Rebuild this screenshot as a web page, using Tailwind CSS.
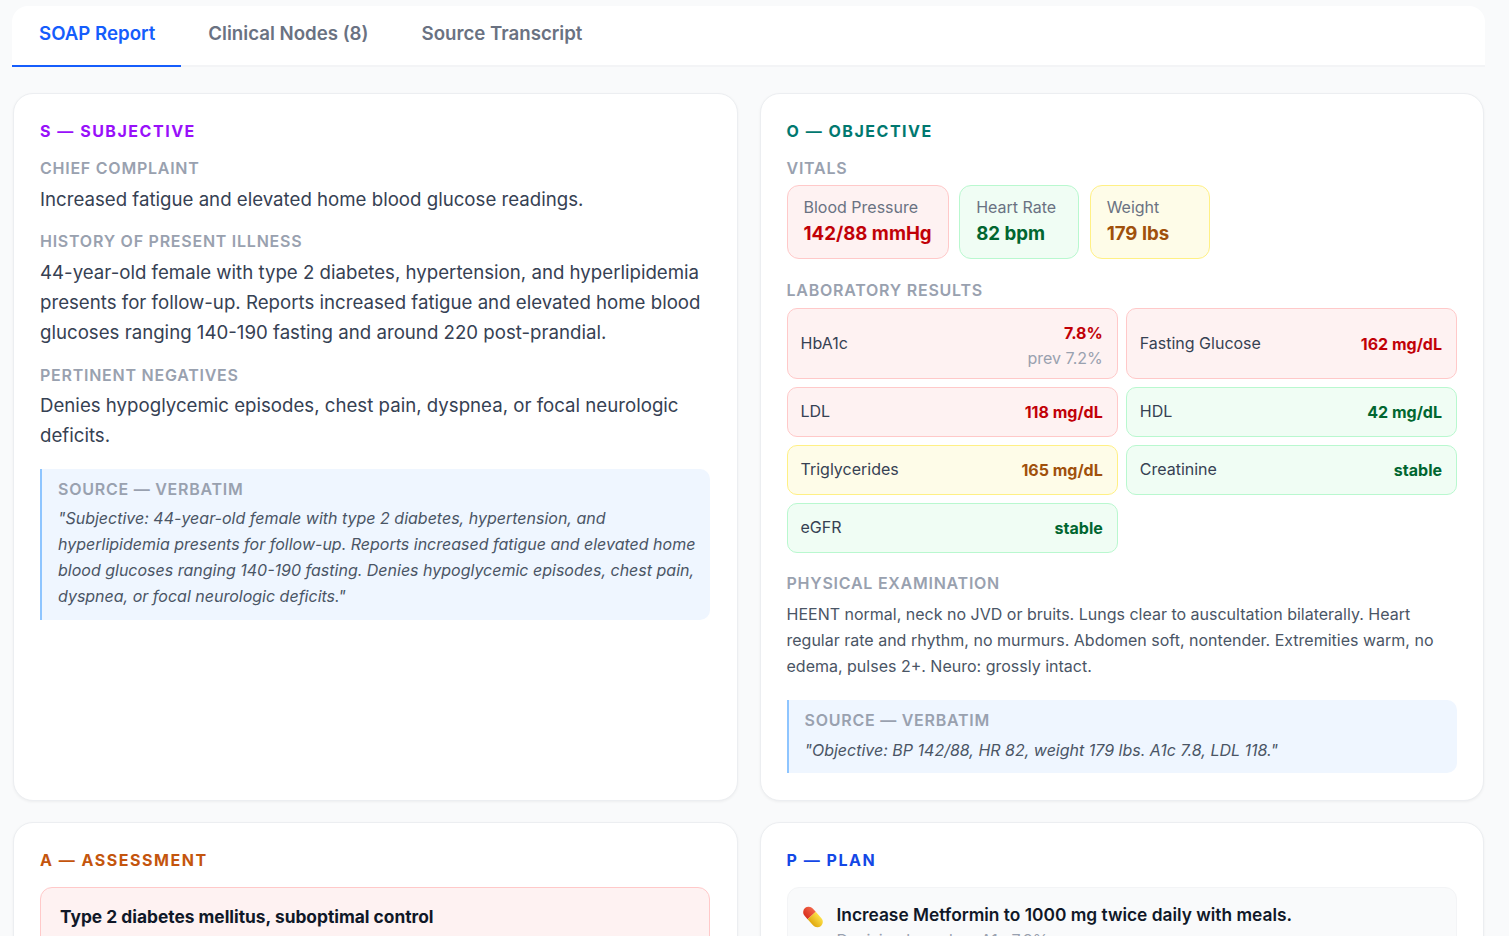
<!DOCTYPE html>
<html lang="en">
<head>
    <meta charset="UTF-8">
    <meta name="viewport" content="width=device-width, initial-scale=1.0">
    <title>SOAP Report</title>
    <script src="https://cdn.jsdelivr.net/npm/@tailwindcss/browser@4"></script>
</head>
<body class="h-[936px] overflow-hidden bg-gray-50 font-['Inter',sans-serif] text-gray-700">
    <div class="pl-[12px] pr-[24px] pt-[6px]">
        <!-- tabs -->
        <div class="flex h-[61px] rounded-t-[16px] bg-white border-b-2 border-gray-100 text-[18.67px] font-semibold text-gray-500">
            <div class="h-[61px] pl-[27px] pr-[26px] pt-[14px] text-blue-600 border-b-2 border-blue-600">SOAP Report</div>
            <div class="pl-[27px] pr-[26px] pt-[14px]">Clinical Nodes (8)</div>
            <div class="pl-[27px] pr-[26px] pt-[14px]">Source Transcript</div>
        </div>

        <div class="mt-[26px] mx-px grid grid-cols-2 gap-x-[22px] gap-y-[21px]">
            <!-- subjective -->
            <div class="h-[708px] rounded-[20px] bg-white border border-[#eceef1] shadow-[0_1px_3px_rgba(0,0,0,0.05)] px-[26px] pt-[26px]">
                <h2 class="text-[16px] leading-[22px] font-bold tracking-[0.095em] text-purple-600">S — SUBJECTIVE</h2>
                <h3 class="mt-[15px] text-[16px] leading-[22px] font-semibold tracking-[0.047em] text-gray-400">CHIEF COMPLAINT</h3>
                <p class="mt-[6px] text-[18.67px] leading-[30px]">Increased fatigue and elevated home blood glucose readings.</p>
                <h3 class="mt-[15px] text-[16px] leading-[22px] font-semibold tracking-[0.047em] text-gray-400">HISTORY OF PRESENT ILLNESS</h3>
                <p class="mt-[6px] text-[18.67px] leading-[30px]">44-year-old female with type 2 diabetes, hypertension, and hyperlipidemia presents for follow-up. Reports increased fatigue and elevated home blood glucoses ranging 140-190 fasting and around 220 post-prandial.</p>
                <h3 class="mt-[16px] text-[16px] leading-[22px] font-semibold tracking-[0.047em] text-gray-400">PERTINENT NEGATIVES</h3>
                <p class="mt-[5px] text-[18.67px] leading-[30px]">Denies hypoglycemic episodes, chest pain, dyspnea, or focal neurologic deficits.</p>
                <div class="mt-[18px] mr-px rounded-r-[10px] bg-blue-50 border-l-2 border-blue-300 pl-[16px] pr-[12px] pt-[9px] pb-[11px]">
                    <div class="text-[16px] leading-[22px] font-semibold tracking-[0.047em] text-gray-400">SOURCE — VERBATIM</div>
                    <p class="mt-[5px] text-[16px] leading-[26px] italic text-gray-600">"Subjective: 44-year-old female with type 2 diabetes, hypertension, and hyperlipidemia presents for follow-up. Reports increased fatigue and elevated home blood glucoses ranging 140-190 fasting. Denies hypoglycemic episodes, chest pain, dyspnea, or focal neurologic deficits."</p>
                </div>
            </div>

            <!-- objective -->
            <div class="h-[708px] rounded-[20px] bg-white border border-[#eceef1] shadow-[0_1px_3px_rgba(0,0,0,0.05)] px-[26px] pt-[26px]">
                <h2 class="text-[16px] leading-[22px] font-bold tracking-[0.095em] text-teal-700">O — OBJECTIVE</h2>
                <h3 class="mt-[15px] text-[16px] leading-[22px] font-semibold tracking-[0.047em] text-gray-400">VITALS</h3>
                <div class="mt-[6px] flex gap-[10.5px]">
                    <div class="h-[74px] min-w-[120px] rounded-[12px] bg-red-50 border border-red-200 px-[16px] pt-[10px]">
                        <div class="text-[16px] leading-[22px] text-gray-500">Blood Pressure</div>
                        <div class="mt-[3px] text-[18.67px] leading-[26px] font-bold text-red-700">142/88 mmHg</div>
                    </div>
                    <div class="h-[74px] min-w-[120px] rounded-[12px] bg-green-50 border border-green-200 px-[16px] pt-[10px]">
                        <div class="text-[16px] leading-[22px] text-gray-500">Heart Rate</div>
                        <div class="mt-[3px] text-[18.67px] leading-[26px] font-bold text-green-800">82 bpm</div>
                    </div>
                    <div class="h-[74px] min-w-[120px] rounded-[12px] bg-yellow-50 border border-yellow-200 px-[16px] pt-[10px]">
                        <div class="text-[16px] leading-[22px] text-gray-500">Weight</div>
                        <div class="mt-[3px] text-[18.67px] leading-[26px] font-bold text-[#a0500c]">179 lbs</div>
                    </div>
                </div>
                <h3 class="mt-[20px] text-[16px] leading-[22px] font-semibold tracking-[0.047em] text-gray-400">LABORATORY RESULTS</h3>
                <div class="mt-[7px] grid grid-cols-2 gap-x-[8px] gap-y-[8px] text-[16px]">
                    <div class="h-[71px] flex items-center justify-between rounded-[10px] bg-red-50 border border-red-200 pl-[13px] pr-[14px]">
                        <span class="pb-[2px]">HbA1c</span>
                        <div class="pt-[5px] text-right leading-[25px]">
                            <div class="font-bold text-red-700">7.8%</div>
                            <div class="text-gray-400">prev 7.2%</div>
                        </div>
                    </div>
                    <div class="h-[71px] flex items-center justify-between rounded-[10px] bg-red-50 border border-red-200 pl-[13px] pr-[14px]">
                        <span class="pb-[2px]">Fasting Glucose</span><span class="font-bold text-red-700">162 mg/dL</span>
                    </div>
                    <div class="h-[50px] flex items-center justify-between rounded-[10px] bg-red-50 border border-red-200 pl-[13px] pr-[14px]">
                        <span class="pb-[3px]">LDL</span><span class="font-bold text-red-700">118 mg/dL</span>
                    </div>
                    <div class="h-[50px] flex items-center justify-between rounded-[10px] bg-green-50 border border-green-200 pl-[13px] pr-[14px]">
                        <span class="pb-[3px]">HDL</span><span class="font-bold text-green-800">42 mg/dL</span>
                    </div>
                    <div class="h-[50px] flex items-center justify-between rounded-[10px] bg-yellow-50 border border-yellow-200 pl-[13px] pr-[14px]">
                        <span class="pb-[3px]">Triglycerides</span><span class="font-bold text-[#a0500c]">165 mg/dL</span>
                    </div>
                    <div class="h-[50px] flex items-center justify-between rounded-[10px] bg-green-50 border border-green-200 pl-[13px] pr-[14px]">
                        <span class="pb-[3px]">Creatinine</span><span class="font-bold text-green-800">stable</span>
                    </div>
                    <div class="h-[50px] flex items-center justify-between rounded-[10px] bg-green-50 border border-green-200 pl-[13px] pr-[14px]">
                        <span class="pb-[3px]">eGFR</span><span class="font-bold text-green-800">stable</span>
                    </div>
                </div>
                <h3 class="mt-[19px] text-[16px] leading-[22px] font-semibold tracking-[0.047em] text-gray-400">PHYSICAL EXAMINATION</h3>
                <p class="mt-[7px] text-[16px] leading-[26px] text-gray-600">HEENT normal, neck no JVD or bruits. Lungs clear to auscultation bilaterally. Heart regular rate and rhythm, no murmurs. Abdomen soft, nontender. Extremities warm, no edema, pulses 2+. Neuro: grossly intact.</p>
                <div class="mt-[21px] rounded-r-[10px] bg-blue-50 border-l-2 border-blue-300 pl-[16px] pr-[12px] pt-[9px] pb-[10px]">
                    <div class="text-[16px] leading-[22px] font-semibold tracking-[0.047em] text-gray-400">SOURCE — VERBATIM</div>
                    <p class="mt-[6px] text-[16px] leading-[26px] italic text-gray-600">"Objective: BP 142/88, HR 82, weight 179 lbs. A1c 7.8, LDL 118."</p>
                </div>
            </div>

            <!-- assessment -->
            <div class="h-[400px] rounded-[20px] bg-white border border-[#eceef1] shadow-[0_1px_3px_rgba(0,0,0,0.05)] px-[26px] pt-[26px]">
                <h2 class="text-[16px] leading-[22px] font-bold tracking-[0.095em] text-[#c4550d]">A — ASSESSMENT</h2>
                <div class="mt-[16px] mr-px h-[120px] rounded-[12px] bg-red-50 border border-red-200 px-[19px] pt-[16px]">
                    <div class="text-[17.33px] leading-[26px] font-bold text-gray-900">Type 2 diabetes mellitus, suboptimal control</div>
                </div>
            </div>

            <!-- plan -->
            <div class="h-[400px] rounded-[20px] bg-white border border-[#eceef1] shadow-[0_1px_3px_rgba(0,0,0,0.05)] px-[26px] pt-[26px]">
                <h2 class="text-[16px] leading-[22px] font-bold tracking-[0.095em] text-blue-700">P — PLAN</h2>
                <div class="mt-[16px] flex gap-[12px] rounded-[12px] bg-gray-50 border border-gray-100 px-[13px] pt-[14px] pb-[14px]">
                    <svg class="mt-[3px] h-[24px] w-[24px] shrink-0 overflow-visible" viewBox="0 0 24 24">
                        <defs>
                            <linearGradient id="pillRed" x1="0" y1="0" x2="0" y2="1">
                                <stop offset="0" stop-color="#f2654a"/>
                                <stop offset="1" stop-color="#d92f1c"/>
                            </linearGradient>
                            <linearGradient id="pillYellow" x1="0" y1="0" x2="0" y2="1">
                                <stop offset="0" stop-color="#fde047"/>
                                <stop offset="1" stop-color="#e0a80f"/>
                            </linearGradient>
                        </defs>
                        <g transform="rotate(48 12 12)">
                            <path d="M0 12a5.5 5.5 0 0 1 5.5-5.5h4.5v11h-4.5a5.5 5.5 0 0 1-5.5-5.5z" fill="url(#pillRed)"/>
                            <path d="M10 6.5h8.500a5.500 5.500 0 0 1 0 11h-8.500z" fill="url(#pillYellow)"/>
                        </g>
                    </svg>
                    <div>
                        <div class="text-[17.33px] leading-[26px] font-semibold text-gray-900">Increase Metformin to 1000 mg twice daily with meals.</div>
                        <div class="mt-px text-[16px] leading-[22px] text-gray-400">Decision based on A1c 7.8%</div>
                    </div>
                </div>
            </div>
        </div>
    </div>
</body>
</html>
